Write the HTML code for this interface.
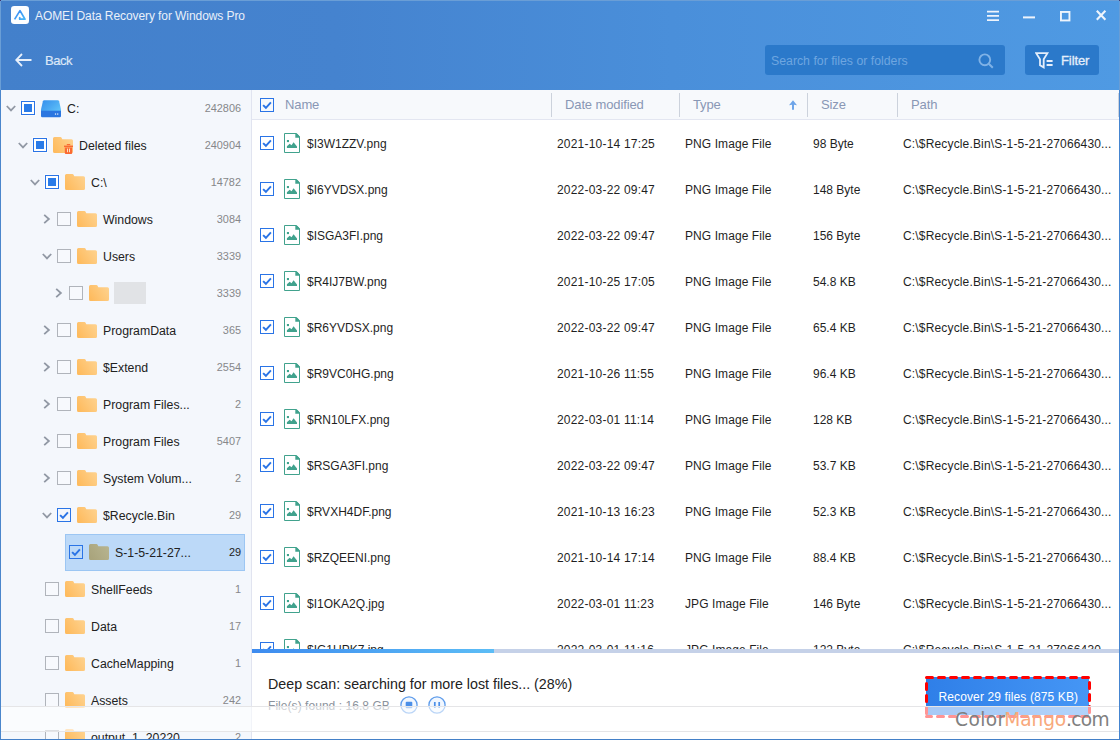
<!DOCTYPE html>
<html><head><meta charset="utf-8"><title>AOMEI Data Recovery for Windows Pro</title>
<style>
*{box-sizing:border-box;margin:0;padding:0}
html,body{width:1120px;height:740px;overflow:hidden;background:#fff}
body{font-family:"Liberation Sans",sans-serif;font-size:12px;color:#1c1c1c;position:relative}
.abs{position:absolute}
#hdr{position:absolute;left:0;top:0;width:1120px;height:90px;background:linear-gradient(90deg,#4380cb 0%,#4583cf 30%,#4a8fda 60%,#4f9ae3 100%)}
#title{position:absolute;left:35px;top:8px;font-size:12px;letter-spacing:-.08px;color:#e9f0fa;line-height:16px;white-space:nowrap}
#back{position:absolute;left:45px;top:53px;font-size:13px;color:#dce7f7;line-height:16px;letter-spacing:-.45px;-webkit-text-stroke:.2px #dce7f7}
#search{position:absolute;left:765px;top:45px;width:240px;height:30px;background:#2b79ca;border-radius:3px}
#search span{position:absolute;left:6px;top:9px;font-size:12.3px;line-height:14px;color:#6ea6e0;white-space:nowrap}
#filter{position:absolute;left:1025px;top:45px;width:74px;height:30px;background:#2b79ca;border-radius:3px}
#filter span{position:absolute;left:36px;top:8px;font-size:13px;line-height:16px;color:#e4eefb;letter-spacing:-.1px;-webkit-text-stroke:.3px #e4eefb}
#left{position:absolute;left:0;top:90px;width:251px;height:650px;background:#f4f7fc;overflow:hidden}
#lb{position:absolute;left:0;top:0;width:1px;height:740px;background:linear-gradient(180deg,#6a9ed6 0,#6a9ed6 90px,#4a86cc 90px,#4a86cc 100%)}
#tb{position:absolute;left:0;top:0;width:1120px;height:1px;background:#6a9ed6}
#bb{position:absolute;left:0;top:739px;width:1120px;height:1px;background:#4480c8}
#rb{position:absolute;left:1119px;top:0;width:1px;height:740px;background:linear-gradient(180deg,#6a9dd4 0,#6a9dd4 90px,#4585d0 90px,#4585d0 100%)}
.cnr{position:absolute;top:0;width:1px;height:1px;background:#3a3270}
#vsep{position:absolute;left:251px;top:90px;width:1px;height:650px;background:#e1e4f0}
.tl{position:absolute;font-size:12.3px;line-height:16px;white-space:nowrap;color:#222}
.tc{position:absolute;right:879px;font-size:10.9px;line-height:16px;color:#86878a;text-align:right;white-space:nowrap}
.cb{position:absolute;width:14px;height:14px;background:#fff;box-shadow:0 0 0 1px rgba(255,255,255,.5)}
.cbn{border:1px solid #b0b4bb;background:#f7f9fd;box-shadow:none}
.cbp{border:1px solid #2a74e6}
.cbp i{position:absolute;left:2px;top:2px;width:8px;height:8px;background:#2a7be8}
.cbc{border:1px solid #2a74e6;background:transparent;box-shadow:none}
.cbc svg{position:absolute;left:0;top:0}
#sel{position:absolute;left:65px;top:534px;width:180px;height:37px;background:#bcd9f8;border:1px solid #9cc6f3}
#lh{position:absolute;left:252px;top:90px;width:867px;height:30px;background:#f7f9fc;border-bottom:1px solid #e3e6f1}
.hl{position:absolute;top:97px;font-size:13px;letter-spacing:-.12px;line-height:16px;color:#8997b5;white-space:nowrap}
.hs{position:absolute;top:93px;width:1px;height:24px;background:#ccd2dc}
.fc{position:absolute;font-size:12px;line-height:16px;white-space:nowrap;color:#1f1f1f}
#list{position:absolute;left:252px;top:120px;width:866px;height:529px;overflow:hidden;background:#fff}
#pbar{position:absolute;left:252px;top:649px;width:867px;height:4px;background:#c5d1e8}
#pbar i{position:absolute;left:0;top:0;width:242px;height:4px;background:linear-gradient(90deg,#3d8bef,#5cbdf6)}
#deep{position:absolute;left:268px;top:676px;font-size:14.25px;line-height:17px;color:#222;white-space:nowrap}
#found{position:absolute;left:268px;top:698.5px;letter-spacing:.05px;font-size:12px;line-height:14px;color:#8b929c;white-space:nowrap}
#rec{position:absolute;left:926px;top:677px;width:163px;height:38px;background:linear-gradient(90deg,#2f7fe8,#4596f5)}
#rec span{position:absolute;left:12.5px;top:12.5px;color:#fff;font-size:12px;letter-spacing:.12px;line-height:15px;white-space:nowrap}
#band{position:absolute;left:1px;top:706px;width:1118px;height:26px;background:rgba(255,255,255,.58);border-top:1px solid #e5e5e7;border-bottom:1px solid #e5e5e7}
#wm{position:absolute;left:955px;top:704.7px;font-size:18.6px;line-height:30px;white-space:nowrap;color:#808080;letter-spacing:-.15px;font-family:"DejaVu Sans","Liberation Sans",sans-serif}
#wm b{font-weight:normal;color:#f8a97c;margin-left:-1.2px}
#wm i{font-style:normal;letter-spacing:.4px}
#wm u{text-decoration:none;letter-spacing:-.65px}
</style></head><body>
<svg width="0" height="0" style="position:absolute"><defs>
<linearGradient id="gf" x1="0" y1="0.7" x2="1" y2="0.2"><stop offset="0" stop-color="#febb5e"/><stop offset="0.35" stop-color="#fec36f"/><stop offset="1" stop-color="#fed28e"/></linearGradient>
<linearGradient id="gd" x1="0" y1="0.7" x2="1" y2="0.2"><stop offset="0" stop-color="#a9a47c"/><stop offset="1" stop-color="#b7b490"/></linearGradient>
<linearGradient id="gdr" x1="0" y1="0.2" x2="1" y2="0.8"><stop offset="0" stop-color="#3892ed"/><stop offset="0.5" stop-color="#4aa8f2"/><stop offset="1" stop-color="#5fc2f9"/></linearGradient>
</defs></svg>
<div id="hdr"></div>

<svg class="abs" style="left:11px;top:6px" width="18" height="18" viewBox="0 0 18 18"><defs><linearGradient id="glg" x1="0" y1="0" x2="1" y2="1"><stop offset="0" stop-color="#3b86f3"/><stop offset="1" stop-color="#44b6f8"/></linearGradient></defs><rect width="18" height="18" rx="3.2" fill="#fdfeff"/><path d="M3.6 13.4 L9 4.6 L14 13.2 H7.9 M9.1 11.2 L8.3 12.6" fill="none" stroke="url(#glg)" stroke-width="1.7" stroke-linejoin="round"/></svg>
<div id="title">AOMEI Data Recovery for Windows Pro</div>
<svg class="abs" style="left:15px;top:53px" width="17" height="14" viewBox="0 0 17 14"><path d="M7 1 L1.2 7 L7 13 M1.5 7 H16.5" fill="none" stroke="#e8f0fb" stroke-width="1.8"/></svg>
<div id="back">Back</div>
<svg class="abs" style="left:987px;top:10px" width="12" height="12" viewBox="0 0 12 12"><path d="M0 1.7 H12 M0 5.9 H12 M0 10.1 H12" stroke="#eef4fc" stroke-width="1.8"/></svg>
<svg class="abs" style="left:1023px;top:15.5px" width="12" height="3" viewBox="0 0 12 3"><rect width="12" height="2" y="0.4" fill="#eef4fc"/></svg>
<svg class="abs" style="left:1060px;top:10.6px" width="11" height="11" viewBox="0 0 11 11"><rect x="0.95" y="0.95" width="8.5" height="8.5" fill="none" stroke="#eef4fc" stroke-width="1.9"/></svg>
<svg class="abs" style="left:1096px;top:9.7px" width="11" height="11" viewBox="0 0 11 11"><path d="M0.8 0.8 L9.4 9.8 M9.4 0.8 L0.8 9.8" stroke="#eef4fc" stroke-width="2.1"/></svg>
<div id="search"><span>Search for files or folders</span>
<svg class="abs" style="left:213px;top:8px" width="16" height="16" viewBox="0 0 16 16"><circle cx="6.8" cy="6.8" r="5.4" fill="none" stroke="#7fb2e6" stroke-width="1.9"/><path d="M10.8 10.8 L14.8 14.8" stroke="#7fb2e6" stroke-width="2"/></svg></div>
<div id="filter"><svg class="abs" style="left:10px;top:7px" width="20" height="17" viewBox="0 0 20 17"><path d="M1.2 1.2 H12.4 L8.7 7.2 V15.4 L5 13.3 V7.2Z" fill="none" stroke="#e4eefb" stroke-width="1.8" stroke-linejoin="miter"/><path d="M11.6 9 H17.6 M11.6 13 H17.6" stroke="#e4eefb" stroke-width="1.8"/></svg><span>Filter</span></div>

<div id="left"></div><div id="vsep"></div>
<div id="sel"></div>
<svg class="abs" style="left:6px;top:105px" width="10" height="7" viewBox="0 0 10 7"><path d="M0.8 1 L5 5.4 L9.2 1" fill="none" stroke="#9198a4" stroke-width="1.8"/></svg>
<div class="cb cbp" style="left:21px;top:101px"><i></i></div>
<svg class="abs" style="left:41px;top:99.5px" width="20" height="18" viewBox="0 0 20 18"><path d="M3.2 0.2 H16.8 Q17.8 0.2 18.1 1.2 L20 9.6 V11.5 H0 V9.6 L1.9 1.2 Q2.2 0.2 3.2 0.2Z" fill="url(#gdr)"/><path d="M0 10.8 H20 V15.9 Q20 17.2 18.7 17.2 H1.3 Q0 17.2 0 15.9Z" fill="#2b76e0"/><rect x="13.9" y="13.5" width="1.2" height="1.1" fill="#fff"/><rect x="16.1" y="13.5" width="1.2" height="1.1" fill="#fff"/></svg>
<div class="tl" style="left:67px;top:101px">C:</div>
<div class="tc" style="top:100px;color:#86878a">242806</div>
<svg class="abs" style="left:18px;top:142px" width="10" height="7" viewBox="0 0 10 7"><path d="M0.8 1 L5 5.4 L9.2 1" fill="none" stroke="#9198a4" stroke-width="1.8"/></svg>
<div class="cb cbp" style="left:33px;top:138px"><i></i></div>
<svg class="abs" style="left:53px;top:137px" width="20" height="16" viewBox="0 0 20 16"><path d="M1.5 0 H7.4 Q8.3 0 8.7 0.9 L9.3 2.2 H18.5 Q20 2.2 20 3.7 V14.5 Q20 16 18.5 16 H1.5 Q0 16 0 14.5 V1.5 Q0 0 1.5 0Z" fill="url(#gf)"/></svg>
<svg class="abs" style="left:64px;top:144px" width="9" height="10" viewBox="0 0 9 10"><rect x="2.8" y="0" width="3.4" height="1.2" fill="#fa6a33"/><rect x="0" y="1.6" width="9" height="1.5" fill="#fa6a33"/><path d="M0.8 3.4 H8.2 V9 Q8.2 10 7.2 10 H1.8 Q0.8 10 0.8 9Z" fill="#fa6a33"/><rect x="3" y="4.6" width="1" height="3.6" fill="#fde3c0"/><rect x="5" y="4.6" width="1" height="3.6" fill="#fde3c0"/></svg>
<div class="tl" style="left:79px;top:138px">Deleted files</div>
<div class="tc" style="top:137px;color:#86878a">240904</div>
<svg class="abs" style="left:30px;top:179px" width="10" height="7" viewBox="0 0 10 7"><path d="M0.8 1 L5 5.4 L9.2 1" fill="none" stroke="#9198a4" stroke-width="1.8"/></svg>
<div class="cb cbp" style="left:45px;top:175px"><i></i></div>
<svg class="abs" style="left:65px;top:174px" width="20" height="16" viewBox="0 0 20 16"><path d="M1.5 0 H7.4 Q8.3 0 8.7 0.9 L9.3 2.2 H18.5 Q20 2.2 20 3.7 V14.5 Q20 16 18.5 16 H1.5 Q0 16 0 14.5 V1.5 Q0 0 1.5 0Z" fill="url(#gf)"/></svg>
<div class="tl" style="left:91px;top:175px">C:\</div>
<div class="tc" style="top:174px;color:#86878a">14782</div>
<svg class="abs" style="left:43px;top:214px" width="8" height="10" viewBox="0 0 8 10"><path d="M1.2 0.8 L5.9 5 L1.2 9.2" fill="none" stroke="#9198a4" stroke-width="1.8"/></svg>
<div class="cb cbn" style="left:57px;top:212px"></div>
<svg class="abs" style="left:77px;top:211px" width="20" height="16" viewBox="0 0 20 16"><path d="M1.5 0 H7.4 Q8.3 0 8.7 0.9 L9.3 2.2 H18.5 Q20 2.2 20 3.7 V14.5 Q20 16 18.5 16 H1.5 Q0 16 0 14.5 V1.5 Q0 0 1.5 0Z" fill="url(#gf)"/></svg>
<div class="tl" style="left:103px;top:212px">Windows</div>
<div class="tc" style="top:211px;color:#86878a">3084</div>
<svg class="abs" style="left:42px;top:253px" width="10" height="7" viewBox="0 0 10 7"><path d="M0.8 1 L5 5.4 L9.2 1" fill="none" stroke="#9198a4" stroke-width="1.8"/></svg>
<div class="cb cbn" style="left:57px;top:249px"></div>
<svg class="abs" style="left:77px;top:248px" width="20" height="16" viewBox="0 0 20 16"><path d="M1.5 0 H7.4 Q8.3 0 8.7 0.9 L9.3 2.2 H18.5 Q20 2.2 20 3.7 V14.5 Q20 16 18.5 16 H1.5 Q0 16 0 14.5 V1.5 Q0 0 1.5 0Z" fill="url(#gf)"/></svg>
<div class="tl" style="left:103px;top:249px">Users</div>
<div class="tc" style="top:248px;color:#86878a">3339</div>
<svg class="abs" style="left:55px;top:288px" width="8" height="10" viewBox="0 0 8 10"><path d="M1.2 0.8 L5.9 5 L1.2 9.2" fill="none" stroke="#9198a4" stroke-width="1.8"/></svg>
<div class="cb cbn" style="left:69px;top:286px"></div>
<svg class="abs" style="left:89px;top:285px" width="20" height="16" viewBox="0 0 20 16"><path d="M1.5 0 H7.4 Q8.3 0 8.7 0.9 L9.3 2.2 H18.5 Q20 2.2 20 3.7 V14.5 Q20 16 18.5 16 H1.5 Q0 16 0 14.5 V1.5 Q0 0 1.5 0Z" fill="url(#gf)"/></svg>
<div class="abs" style="left:114px;top:282px;width:32px;height:22px;background:#e1e3e6"></div>
<div class="tc" style="top:285px;color:#86878a">3339</div>
<svg class="abs" style="left:43px;top:325px" width="8" height="10" viewBox="0 0 8 10"><path d="M1.2 0.8 L5.9 5 L1.2 9.2" fill="none" stroke="#9198a4" stroke-width="1.8"/></svg>
<div class="cb cbn" style="left:57px;top:323px"></div>
<svg class="abs" style="left:77px;top:322px" width="20" height="16" viewBox="0 0 20 16"><path d="M1.5 0 H7.4 Q8.3 0 8.7 0.9 L9.3 2.2 H18.5 Q20 2.2 20 3.7 V14.5 Q20 16 18.5 16 H1.5 Q0 16 0 14.5 V1.5 Q0 0 1.5 0Z" fill="url(#gf)"/></svg>
<div class="tl" style="left:103px;top:323px">ProgramData</div>
<div class="tc" style="top:322px;color:#86878a">365</div>
<svg class="abs" style="left:43px;top:362px" width="8" height="10" viewBox="0 0 8 10"><path d="M1.2 0.8 L5.9 5 L1.2 9.2" fill="none" stroke="#9198a4" stroke-width="1.8"/></svg>
<div class="cb cbn" style="left:57px;top:360px"></div>
<svg class="abs" style="left:77px;top:359px" width="20" height="16" viewBox="0 0 20 16"><path d="M1.5 0 H7.4 Q8.3 0 8.7 0.9 L9.3 2.2 H18.5 Q20 2.2 20 3.7 V14.5 Q20 16 18.5 16 H1.5 Q0 16 0 14.5 V1.5 Q0 0 1.5 0Z" fill="url(#gf)"/></svg>
<div class="tl" style="left:103px;top:360px">$Extend</div>
<div class="tc" style="top:359px;color:#86878a">2554</div>
<svg class="abs" style="left:43px;top:399px" width="8" height="10" viewBox="0 0 8 10"><path d="M1.2 0.8 L5.9 5 L1.2 9.2" fill="none" stroke="#9198a4" stroke-width="1.8"/></svg>
<div class="cb cbn" style="left:57px;top:397px"></div>
<svg class="abs" style="left:77px;top:396px" width="20" height="16" viewBox="0 0 20 16"><path d="M1.5 0 H7.4 Q8.3 0 8.7 0.9 L9.3 2.2 H18.5 Q20 2.2 20 3.7 V14.5 Q20 16 18.5 16 H1.5 Q0 16 0 14.5 V1.5 Q0 0 1.5 0Z" fill="url(#gf)"/></svg>
<div class="tl" style="left:103px;top:397px">Program Files...</div>
<div class="tc" style="top:396px;color:#86878a">2</div>
<svg class="abs" style="left:43px;top:436px" width="8" height="10" viewBox="0 0 8 10"><path d="M1.2 0.8 L5.9 5 L1.2 9.2" fill="none" stroke="#9198a4" stroke-width="1.8"/></svg>
<div class="cb cbn" style="left:57px;top:434px"></div>
<svg class="abs" style="left:77px;top:433px" width="20" height="16" viewBox="0 0 20 16"><path d="M1.5 0 H7.4 Q8.3 0 8.7 0.9 L9.3 2.2 H18.5 Q20 2.2 20 3.7 V14.5 Q20 16 18.5 16 H1.5 Q0 16 0 14.5 V1.5 Q0 0 1.5 0Z" fill="url(#gf)"/></svg>
<div class="tl" style="left:103px;top:434px">Program Files</div>
<div class="tc" style="top:433px;color:#86878a">5407</div>
<svg class="abs" style="left:43px;top:473px" width="8" height="10" viewBox="0 0 8 10"><path d="M1.2 0.8 L5.9 5 L1.2 9.2" fill="none" stroke="#9198a4" stroke-width="1.8"/></svg>
<div class="cb cbn" style="left:57px;top:471px"></div>
<svg class="abs" style="left:77px;top:470px" width="20" height="16" viewBox="0 0 20 16"><path d="M1.5 0 H7.4 Q8.3 0 8.7 0.9 L9.3 2.2 H18.5 Q20 2.2 20 3.7 V14.5 Q20 16 18.5 16 H1.5 Q0 16 0 14.5 V1.5 Q0 0 1.5 0Z" fill="url(#gf)"/></svg>
<div class="tl" style="left:103px;top:471px">System Volum...</div>
<div class="tc" style="top:470px;color:#86878a">2</div>
<svg class="abs" style="left:42px;top:512px" width="10" height="7" viewBox="0 0 10 7"><path d="M0.8 1 L5 5.4 L9.2 1" fill="none" stroke="#9198a4" stroke-width="1.8"/></svg>
<div class="cb cbc" style="left:57px;top:508px"><svg width="12" height="12" viewBox="0 0 12 12"><path d="M2.1 6.1 L4.9 8.8 L9.9 3.3" fill="none" stroke="#2a74e6" stroke-width="1.9"/></svg></div>
<svg class="abs" style="left:77px;top:507px" width="20" height="16" viewBox="0 0 20 16"><path d="M1.5 0 H7.4 Q8.3 0 8.7 0.9 L9.3 2.2 H18.5 Q20 2.2 20 3.7 V14.5 Q20 16 18.5 16 H1.5 Q0 16 0 14.5 V1.5 Q0 0 1.5 0Z" fill="url(#gf)"/></svg>
<div class="tl" style="left:103px;top:508px">$Recycle.Bin</div>
<div class="tc" style="top:507px;color:#86878a">29</div>

<div class="cb cbc" style="left:69px;top:545px"><svg width="12" height="12" viewBox="0 0 12 12"><path d="M2.1 6.1 L4.9 8.8 L9.9 3.3" fill="none" stroke="#2a74e6" stroke-width="1.9"/></svg></div>
<svg class="abs" style="left:89px;top:544px" width="20" height="16" viewBox="0 0 20 16"><path d="M1.5 0 H7.4 Q8.3 0 8.7 0.9 L9.3 2.2 H18.5 Q20 2.2 20 3.7 V14.5 Q20 16 18.5 16 H1.5 Q0 16 0 14.5 V1.5 Q0 0 1.5 0Z" fill="url(#gd)"/></svg>
<div class="tl" style="left:115px;top:545px">S-1-5-21-27...</div>
<div class="tc" style="top:544px;color:#222">29</div>

<div class="cb cbn" style="left:45px;top:582px"></div>
<svg class="abs" style="left:65px;top:581px" width="20" height="16" viewBox="0 0 20 16"><path d="M1.5 0 H7.4 Q8.3 0 8.7 0.9 L9.3 2.2 H18.5 Q20 2.2 20 3.7 V14.5 Q20 16 18.5 16 H1.5 Q0 16 0 14.5 V1.5 Q0 0 1.5 0Z" fill="url(#gf)"/></svg>
<div class="tl" style="left:91px;top:582px">ShellFeeds</div>
<div class="tc" style="top:581px;color:#86878a">1</div>

<div class="cb cbn" style="left:45px;top:619px"></div>
<svg class="abs" style="left:65px;top:618px" width="20" height="16" viewBox="0 0 20 16"><path d="M1.5 0 H7.4 Q8.3 0 8.7 0.9 L9.3 2.2 H18.5 Q20 2.2 20 3.7 V14.5 Q20 16 18.5 16 H1.5 Q0 16 0 14.5 V1.5 Q0 0 1.5 0Z" fill="url(#gf)"/></svg>
<div class="tl" style="left:91px;top:619px">Data</div>
<div class="tc" style="top:618px;color:#86878a">17</div>

<div class="cb cbn" style="left:45px;top:656px"></div>
<svg class="abs" style="left:65px;top:655px" width="20" height="16" viewBox="0 0 20 16"><path d="M1.5 0 H7.4 Q8.3 0 8.7 0.9 L9.3 2.2 H18.5 Q20 2.2 20 3.7 V14.5 Q20 16 18.5 16 H1.5 Q0 16 0 14.5 V1.5 Q0 0 1.5 0Z" fill="url(#gf)"/></svg>
<div class="tl" style="left:91px;top:656px">CacheMapping</div>
<div class="tc" style="top:655px;color:#86878a">1</div>

<div class="cb cbn" style="left:45px;top:693px"></div>
<svg class="abs" style="left:65px;top:692px" width="20" height="16" viewBox="0 0 20 16"><path d="M1.5 0 H7.4 Q8.3 0 8.7 0.9 L9.3 2.2 H18.5 Q20 2.2 20 3.7 V14.5 Q20 16 18.5 16 H1.5 Q0 16 0 14.5 V1.5 Q0 0 1.5 0Z" fill="url(#gf)"/></svg>
<div class="tl" style="left:91px;top:693px">Assets</div>
<div class="tc" style="top:692px;color:#86878a">242</div>

<div class="cb cbn" style="left:45px;top:730px"></div>
<svg class="abs" style="left:65px;top:729px" width="20" height="16" viewBox="0 0 20 16"><path d="M1.5 0 H7.4 Q8.3 0 8.7 0.9 L9.3 2.2 H18.5 Q20 2.2 20 3.7 V14.5 Q20 16 18.5 16 H1.5 Q0 16 0 14.5 V1.5 Q0 0 1.5 0Z" fill="url(#gf)"/></svg>
<div class="tl" style="left:91px;top:730px">output_1_20220...</div>
<div class="tc" style="top:729px;color:#86878a">2</div>
<div id="lh"></div>
<div class="cb cbc" style="left:260px;top:98px"><svg width="12" height="12" viewBox="0 0 12 12"><path d="M2.1 6.1 L4.9 8.8 L9.9 3.3" fill="none" stroke="#2a74e6" stroke-width="1.9"/></svg></div>
<div class="hl" style="left:285px">Name</div>
<div class="hl" style="left:565px">Date modified</div>
<div class="hl" style="left:693px">Type</div>
<div class="hl" style="left:821px">Size</div>
<div class="hl" style="left:911px">Path</div>
<div class="hs" style="left:551px"></div>
<div class="hs" style="left:679px"></div>
<div class="hs" style="left:807px"></div>
<div class="hs" style="left:897px"></div>
<div class="hs" style="left:1118px"></div>
<svg class="abs" style="left:789px;top:100px" width="8" height="10" viewBox="0 0 8 10"><path d="M4 0.2 L8 5.2 L5 4.7 V9.8 H3 V4.7 L0 5.2Z" fill="#6ea5e9"/></svg>
<div id="list">
<div class="cb cbc" style="left:8px;top:16px"><svg width="12" height="12" viewBox="0 0 12 12"><path d="M2.1 6.1 L4.9 8.8 L9.9 3.3" fill="none" stroke="#2a74e6" stroke-width="1.9"/></svg></div>
<svg class="abs" style="left:32px;top:13px" width="16" height="20" viewBox="0 0 16 20"><path d="M0.5 0.5 H12.6 L15.5 3.4 V19.5 H0.5Z" fill="#fff" stroke="#41a28d" stroke-width="1"/><path d="M11.3 0.5 H12.6 L15.5 3.4 V4.8 H11.3Z" fill="#41a28d"/><path d="M2.9 15 V13.3 L5.7 10.8 L7.5 12.3 L9.6 9.2 L13 13.4 V15Z" fill="#41a28d"/><rect x="2.9" y="7" width="2.1" height="2.1" fill="#41a28d"/></svg>
<div class="fc" style="left:55px;top:16px;letter-spacing:0px">$I3W1ZZV.png</div>
<div class="fc" style="left:305px;top:16px;letter-spacing:0.2px">2021-10-14 17:25</div>
<div class="fc" style="left:433px;top:16px;letter-spacing:0.08px">PNG Image File</div>
<div class="fc" style="left:561px;top:16px;letter-spacing:0px">98 Byte</div>
<div class="fc" style="left:651px;top:16px;letter-spacing:0.16px">C:\$Recycle.Bin\S-1-5-21-27066430...</div>
<div class="cb cbc" style="left:8px;top:62px"><svg width="12" height="12" viewBox="0 0 12 12"><path d="M2.1 6.1 L4.9 8.8 L9.9 3.3" fill="none" stroke="#2a74e6" stroke-width="1.9"/></svg></div>
<svg class="abs" style="left:32px;top:59px" width="16" height="20" viewBox="0 0 16 20"><path d="M0.5 0.5 H12.6 L15.5 3.4 V19.5 H0.5Z" fill="#fff" stroke="#41a28d" stroke-width="1"/><path d="M11.3 0.5 H12.6 L15.5 3.4 V4.8 H11.3Z" fill="#41a28d"/><path d="M2.9 15 V13.3 L5.7 10.8 L7.5 12.3 L9.6 9.2 L13 13.4 V15Z" fill="#41a28d"/><rect x="2.9" y="7" width="2.1" height="2.1" fill="#41a28d"/></svg>
<div class="fc" style="left:55px;top:62px;letter-spacing:0px">$I6YVDSX.png</div>
<div class="fc" style="left:305px;top:62px;letter-spacing:0.2px">2022-03-22 09:47</div>
<div class="fc" style="left:433px;top:62px;letter-spacing:0.08px">PNG Image File</div>
<div class="fc" style="left:561px;top:62px;letter-spacing:0px">148 Byte</div>
<div class="fc" style="left:651px;top:62px;letter-spacing:0.16px">C:\$Recycle.Bin\S-1-5-21-27066430...</div>
<div class="cb cbc" style="left:8px;top:108px"><svg width="12" height="12" viewBox="0 0 12 12"><path d="M2.1 6.1 L4.9 8.8 L9.9 3.3" fill="none" stroke="#2a74e6" stroke-width="1.9"/></svg></div>
<svg class="abs" style="left:32px;top:105px" width="16" height="20" viewBox="0 0 16 20"><path d="M0.5 0.5 H12.6 L15.5 3.4 V19.5 H0.5Z" fill="#fff" stroke="#41a28d" stroke-width="1"/><path d="M11.3 0.5 H12.6 L15.5 3.4 V4.8 H11.3Z" fill="#41a28d"/><path d="M2.9 15 V13.3 L5.7 10.8 L7.5 12.3 L9.6 9.2 L13 13.4 V15Z" fill="#41a28d"/><rect x="2.9" y="7" width="2.1" height="2.1" fill="#41a28d"/></svg>
<div class="fc" style="left:55px;top:108px;letter-spacing:0px">$ISGA3FI.png</div>
<div class="fc" style="left:305px;top:108px;letter-spacing:0.2px">2022-03-22 09:47</div>
<div class="fc" style="left:433px;top:108px;letter-spacing:0.08px">PNG Image File</div>
<div class="fc" style="left:561px;top:108px;letter-spacing:0px">156 Byte</div>
<div class="fc" style="left:651px;top:108px;letter-spacing:0.16px">C:\$Recycle.Bin\S-1-5-21-27066430...</div>
<div class="cb cbc" style="left:8px;top:154px"><svg width="12" height="12" viewBox="0 0 12 12"><path d="M2.1 6.1 L4.9 8.8 L9.9 3.3" fill="none" stroke="#2a74e6" stroke-width="1.9"/></svg></div>
<svg class="abs" style="left:32px;top:151px" width="16" height="20" viewBox="0 0 16 20"><path d="M0.5 0.5 H12.6 L15.5 3.4 V19.5 H0.5Z" fill="#fff" stroke="#41a28d" stroke-width="1"/><path d="M11.3 0.5 H12.6 L15.5 3.4 V4.8 H11.3Z" fill="#41a28d"/><path d="M2.9 15 V13.3 L5.7 10.8 L7.5 12.3 L9.6 9.2 L13 13.4 V15Z" fill="#41a28d"/><rect x="2.9" y="7" width="2.1" height="2.1" fill="#41a28d"/></svg>
<div class="fc" style="left:55px;top:154px;letter-spacing:0px">$R4IJ7BW.png</div>
<div class="fc" style="left:305px;top:154px;letter-spacing:0.2px">2021-10-25 17:05</div>
<div class="fc" style="left:433px;top:154px;letter-spacing:0.08px">PNG Image File</div>
<div class="fc" style="left:561px;top:154px;letter-spacing:0px">54.8 KB</div>
<div class="fc" style="left:651px;top:154px;letter-spacing:0.16px">C:\$Recycle.Bin\S-1-5-21-27066430...</div>
<div class="cb cbc" style="left:8px;top:200px"><svg width="12" height="12" viewBox="0 0 12 12"><path d="M2.1 6.1 L4.9 8.8 L9.9 3.3" fill="none" stroke="#2a74e6" stroke-width="1.9"/></svg></div>
<svg class="abs" style="left:32px;top:197px" width="16" height="20" viewBox="0 0 16 20"><path d="M0.5 0.5 H12.6 L15.5 3.4 V19.5 H0.5Z" fill="#fff" stroke="#41a28d" stroke-width="1"/><path d="M11.3 0.5 H12.6 L15.5 3.4 V4.8 H11.3Z" fill="#41a28d"/><path d="M2.9 15 V13.3 L5.7 10.8 L7.5 12.3 L9.6 9.2 L13 13.4 V15Z" fill="#41a28d"/><rect x="2.9" y="7" width="2.1" height="2.1" fill="#41a28d"/></svg>
<div class="fc" style="left:55px;top:200px;letter-spacing:0px">$R6YVDSX.png</div>
<div class="fc" style="left:305px;top:200px;letter-spacing:0.2px">2022-03-22 09:47</div>
<div class="fc" style="left:433px;top:200px;letter-spacing:0.08px">PNG Image File</div>
<div class="fc" style="left:561px;top:200px;letter-spacing:0px">65.4 KB</div>
<div class="fc" style="left:651px;top:200px;letter-spacing:0.16px">C:\$Recycle.Bin\S-1-5-21-27066430...</div>
<div class="cb cbc" style="left:8px;top:246px"><svg width="12" height="12" viewBox="0 0 12 12"><path d="M2.1 6.1 L4.9 8.8 L9.9 3.3" fill="none" stroke="#2a74e6" stroke-width="1.9"/></svg></div>
<svg class="abs" style="left:32px;top:243px" width="16" height="20" viewBox="0 0 16 20"><path d="M0.5 0.5 H12.6 L15.5 3.4 V19.5 H0.5Z" fill="#fff" stroke="#41a28d" stroke-width="1"/><path d="M11.3 0.5 H12.6 L15.5 3.4 V4.8 H11.3Z" fill="#41a28d"/><path d="M2.9 15 V13.3 L5.7 10.8 L7.5 12.3 L9.6 9.2 L13 13.4 V15Z" fill="#41a28d"/><rect x="2.9" y="7" width="2.1" height="2.1" fill="#41a28d"/></svg>
<div class="fc" style="left:55px;top:246px;letter-spacing:0px">$R9VC0HG.png</div>
<div class="fc" style="left:305px;top:246px;letter-spacing:0.2px">2021-10-26 11:55</div>
<div class="fc" style="left:433px;top:246px;letter-spacing:0.08px">PNG Image File</div>
<div class="fc" style="left:561px;top:246px;letter-spacing:0px">96.4 KB</div>
<div class="fc" style="left:651px;top:246px;letter-spacing:0.16px">C:\$Recycle.Bin\S-1-5-21-27066430...</div>
<div class="cb cbc" style="left:8px;top:292px"><svg width="12" height="12" viewBox="0 0 12 12"><path d="M2.1 6.1 L4.9 8.8 L9.9 3.3" fill="none" stroke="#2a74e6" stroke-width="1.9"/></svg></div>
<svg class="abs" style="left:32px;top:289px" width="16" height="20" viewBox="0 0 16 20"><path d="M0.5 0.5 H12.6 L15.5 3.4 V19.5 H0.5Z" fill="#fff" stroke="#41a28d" stroke-width="1"/><path d="M11.3 0.5 H12.6 L15.5 3.4 V4.8 H11.3Z" fill="#41a28d"/><path d="M2.9 15 V13.3 L5.7 10.8 L7.5 12.3 L9.6 9.2 L13 13.4 V15Z" fill="#41a28d"/><rect x="2.9" y="7" width="2.1" height="2.1" fill="#41a28d"/></svg>
<div class="fc" style="left:55px;top:292px;letter-spacing:0px">$RN10LFX.png</div>
<div class="fc" style="left:305px;top:292px;letter-spacing:0.2px">2022-03-01 11:14</div>
<div class="fc" style="left:433px;top:292px;letter-spacing:0.08px">PNG Image File</div>
<div class="fc" style="left:561px;top:292px;letter-spacing:0px">128 KB</div>
<div class="fc" style="left:651px;top:292px;letter-spacing:0.16px">C:\$Recycle.Bin\S-1-5-21-27066430...</div>
<div class="cb cbc" style="left:8px;top:338px"><svg width="12" height="12" viewBox="0 0 12 12"><path d="M2.1 6.1 L4.9 8.8 L9.9 3.3" fill="none" stroke="#2a74e6" stroke-width="1.9"/></svg></div>
<svg class="abs" style="left:32px;top:335px" width="16" height="20" viewBox="0 0 16 20"><path d="M0.5 0.5 H12.6 L15.5 3.4 V19.5 H0.5Z" fill="#fff" stroke="#41a28d" stroke-width="1"/><path d="M11.3 0.5 H12.6 L15.5 3.4 V4.8 H11.3Z" fill="#41a28d"/><path d="M2.9 15 V13.3 L5.7 10.8 L7.5 12.3 L9.6 9.2 L13 13.4 V15Z" fill="#41a28d"/><rect x="2.9" y="7" width="2.1" height="2.1" fill="#41a28d"/></svg>
<div class="fc" style="left:55px;top:338px;letter-spacing:0px">$RSGA3FI.png</div>
<div class="fc" style="left:305px;top:338px;letter-spacing:0.2px">2022-03-22 09:47</div>
<div class="fc" style="left:433px;top:338px;letter-spacing:0.08px">PNG Image File</div>
<div class="fc" style="left:561px;top:338px;letter-spacing:0px">53.7 KB</div>
<div class="fc" style="left:651px;top:338px;letter-spacing:0.16px">C:\$Recycle.Bin\S-1-5-21-27066430...</div>
<div class="cb cbc" style="left:8px;top:384px"><svg width="12" height="12" viewBox="0 0 12 12"><path d="M2.1 6.1 L4.9 8.8 L9.9 3.3" fill="none" stroke="#2a74e6" stroke-width="1.9"/></svg></div>
<svg class="abs" style="left:32px;top:381px" width="16" height="20" viewBox="0 0 16 20"><path d="M0.5 0.5 H12.6 L15.5 3.4 V19.5 H0.5Z" fill="#fff" stroke="#41a28d" stroke-width="1"/><path d="M11.3 0.5 H12.6 L15.5 3.4 V4.8 H11.3Z" fill="#41a28d"/><path d="M2.9 15 V13.3 L5.7 10.8 L7.5 12.3 L9.6 9.2 L13 13.4 V15Z" fill="#41a28d"/><rect x="2.9" y="7" width="2.1" height="2.1" fill="#41a28d"/></svg>
<div class="fc" style="left:55px;top:384px;letter-spacing:0px">$RVXH4DF.png</div>
<div class="fc" style="left:305px;top:384px;letter-spacing:0.2px">2021-10-13 16:23</div>
<div class="fc" style="left:433px;top:384px;letter-spacing:0.08px">PNG Image File</div>
<div class="fc" style="left:561px;top:384px;letter-spacing:0px">52.3 KB</div>
<div class="fc" style="left:651px;top:384px;letter-spacing:0.16px">C:\$Recycle.Bin\S-1-5-21-27066430...</div>
<div class="cb cbc" style="left:8px;top:430px"><svg width="12" height="12" viewBox="0 0 12 12"><path d="M2.1 6.1 L4.9 8.8 L9.9 3.3" fill="none" stroke="#2a74e6" stroke-width="1.9"/></svg></div>
<svg class="abs" style="left:32px;top:427px" width="16" height="20" viewBox="0 0 16 20"><path d="M0.5 0.5 H12.6 L15.5 3.4 V19.5 H0.5Z" fill="#fff" stroke="#41a28d" stroke-width="1"/><path d="M11.3 0.5 H12.6 L15.5 3.4 V4.8 H11.3Z" fill="#41a28d"/><path d="M2.9 15 V13.3 L5.7 10.8 L7.5 12.3 L9.6 9.2 L13 13.4 V15Z" fill="#41a28d"/><rect x="2.9" y="7" width="2.1" height="2.1" fill="#41a28d"/></svg>
<div class="fc" style="left:55px;top:430px;letter-spacing:0px">$RZQEENI.png</div>
<div class="fc" style="left:305px;top:430px;letter-spacing:0.2px">2021-10-14 17:14</div>
<div class="fc" style="left:433px;top:430px;letter-spacing:0.08px">PNG Image File</div>
<div class="fc" style="left:561px;top:430px;letter-spacing:0px">88.4 KB</div>
<div class="fc" style="left:651px;top:430px;letter-spacing:0.16px">C:\$Recycle.Bin\S-1-5-21-27066430...</div>
<div class="cb cbc" style="left:8px;top:476px"><svg width="12" height="12" viewBox="0 0 12 12"><path d="M2.1 6.1 L4.9 8.8 L9.9 3.3" fill="none" stroke="#2a74e6" stroke-width="1.9"/></svg></div>
<svg class="abs" style="left:32px;top:473px" width="16" height="20" viewBox="0 0 16 20"><path d="M0.5 0.5 H12.6 L15.5 3.4 V19.5 H0.5Z" fill="#fff" stroke="#41a28d" stroke-width="1"/><path d="M11.3 0.5 H12.6 L15.5 3.4 V4.8 H11.3Z" fill="#41a28d"/><path d="M2.9 15 V13.3 L5.7 10.8 L7.5 12.3 L9.6 9.2 L13 13.4 V15Z" fill="#41a28d"/><rect x="2.9" y="7" width="2.1" height="2.1" fill="#41a28d"/></svg>
<div class="fc" style="left:55px;top:476px;letter-spacing:0px">$I1OKA2Q.jpg</div>
<div class="fc" style="left:305px;top:476px;letter-spacing:0.2px">2022-03-01 11:23</div>
<div class="fc" style="left:433px;top:476px;letter-spacing:0.08px">JPG Image File</div>
<div class="fc" style="left:561px;top:476px;letter-spacing:0px">146 Byte</div>
<div class="fc" style="left:651px;top:476px;letter-spacing:0.16px">C:\$Recycle.Bin\S-1-5-21-27066430...</div>
<div class="cb cbc" style="left:8px;top:522px"><svg width="12" height="12" viewBox="0 0 12 12"><path d="M2.1 6.1 L4.9 8.8 L9.9 3.3" fill="none" stroke="#2a74e6" stroke-width="1.9"/></svg></div>
<svg class="abs" style="left:32px;top:519px" width="16" height="20" viewBox="0 0 16 20"><path d="M0.5 0.5 H12.6 L15.5 3.4 V19.5 H0.5Z" fill="#fff" stroke="#41a28d" stroke-width="1"/><path d="M11.3 0.5 H12.6 L15.5 3.4 V4.8 H11.3Z" fill="#41a28d"/><path d="M2.9 15 V13.3 L5.7 10.8 L7.5 12.3 L9.6 9.2 L13 13.4 V15Z" fill="#41a28d"/><rect x="2.9" y="7" width="2.1" height="2.1" fill="#41a28d"/></svg>
<div class="fc" style="left:55px;top:522px;letter-spacing:0px">$IG1UPK7.jpg</div>
<div class="fc" style="left:305px;top:522px;letter-spacing:0.2px">2022-03-01 11:16</div>
<div class="fc" style="left:433px;top:522px;letter-spacing:0.08px">JPG Image File</div>
<div class="fc" style="left:561px;top:522px;letter-spacing:0px">122 Byte</div>
<div class="fc" style="left:651px;top:522px;letter-spacing:0.16px">C:\$Recycle.Bin\S-1-5-21-27066430...</div>
</div>
<div id="pbar"><i></i></div>
<div id="deep">Deep scan: searching for more lost files... (28%)</div>
<div id="found">File(s) found : 16.8 GB</div>
<svg class="abs" style="left:400.3px;top:695.8px" width="18" height="18" viewBox="0 0 18 18"><circle cx="9" cy="9" r="8.1" fill="#f1f7ff" stroke="#5e9ceb" stroke-width="1.3"/><rect x="5.7" y="5.7" width="6.6" height="6.6" rx="1" fill="#4b8fe8"/></svg>
<svg class="abs" style="left:428.3px;top:695.8px" width="18" height="18" viewBox="0 0 18 18"><circle cx="9" cy="9" r="8.1" fill="#f1f7ff" stroke="#5e9ceb" stroke-width="1.3"/><path d="M6.8 6 V12 M11.2 6 V12" stroke="#4b8fe8" stroke-width="1.7"/></svg>
<div id="rec"><span>Recover 29 files (875 KB)</span></div>
<svg class="abs" style="left:920px;top:670px" width="180" height="55" viewBox="920 670 180 55"><g fill="none" stroke="#f00" stroke-width="3" stroke-linecap="round" stroke-dasharray="6 6"><path d="M926.5 677.5 H1089.5 V716.5 H926.5"/><path d="M926.5 677.5 V716.5" stroke-dashoffset="6.1"/></g></svg>
<div id="band"></div>
<div id="wm"><i>Color</i><b>Mango</b><u>.com</u></div>
<div id="lb"></div><div id="tb"></div><div id="rb"></div><div id="bb"></div><div class="cnr" style="left:0"></div><div class="cnr" style="left:1119px"></div>
</body></html>
